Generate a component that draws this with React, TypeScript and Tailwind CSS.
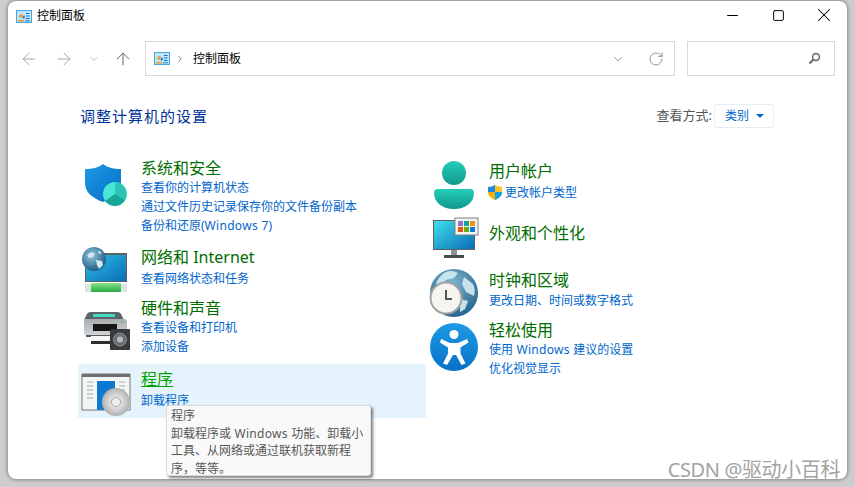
import React from "react";
import { ArrowLeft, ArrowRight, ArrowUp, ChevronDown, ChevronRight, RotateCw, Minus, Square, X } from "lucide-react";

const CpIcon = () => (
  <svg width="16" height="13" viewBox="0 0 16 13">
    <rect x="0.5" y="0.5" width="15" height="12" fill="#bfe6f8" stroke="#45a8e0" />
    <path d="M3 7.500a3.500 3.500 0 0 1 3.500-3.500v3.500z" fill="#f0962c" />
    <path d="M6.500 7.500L8 5a3 3 0 0 1 0 4z" fill="#1d6fc0" />
    <path d="M10 3.500h3.500M10 6h3.500M10 8.500h3.500" stroke="#1d6fc0" strokeWidth="1.200" />
    <rect x="2" y="10" width="6" height="1.500" fill="#f0962c" />
    <rect x="9" y="10" width="5" height="1.500" fill="#4aa3df" />
  </svg>
);

const ShieldIcon = () => (
  <svg width="48" height="48" viewBox="0 0 48 48" className="overflow-visible">
    <defs>
      <linearGradient id="sh" x1="0" y1="0" x2="1" y2="1"><stop offset="0" stopColor="#1a9be8" /><stop offset="1" stopColor="#0a6cc4" /></linearGradient>
      <linearGradient id="tc" x1="0" y1="0" x2="1" y2="1"><stop offset="0" stopColor="#45e6d4" /><stop offset="1" stopColor="#1fb5a5" /></linearGradient>
    </defs>
    <path d="M22 4c5 4 11 5 18 5v14c0 9-7 15-18 19C11 38 4 32 4 23V9c7 0 13-1 18-5z" fill="url(#sh)" />
    <circle cx="34" cy="34" r="12" fill="#49e6d5" />
    <path d="M34 34V22a12 12 0 0 1 10 18z" fill="#2cc4b2" />
    <path d="M34 34l10 6a12 12 0 0 1-20 1z" fill="#1aa598" />
  </svg>
);

const NetworkIcon = () => (
  <svg width="48" height="48" viewBox="0 0 48 48" className="overflow-visible">
    <defs>
      <linearGradient id="nm" x1="0" y1="0" x2="1" y2="1"><stop offset="0" stopColor="#2ec0e0" /><stop offset="1" stopColor="#0a6cb8" /></linearGradient>
      <linearGradient id="ng" x1="0" y1="0" x2="0" y2="1"><stop offset="0" stopColor="#8be08a" /><stop offset="1" stopColor="#24ad45" /></linearGradient>
      <radialGradient id="gl" cx="0.4" cy="0.35" r="0.7"><stop offset="0" stopColor="#8fc6de" /><stop offset="1" stopColor="#19567f" /></radialGradient>
    </defs>
    <rect x="4" y="7" width="42" height="29" fill="#5d6166" />
    <rect x="5" y="9" width="40" height="26" fill="url(#nm)" />
    <rect x="4" y="38" width="42" height="8" fill="#dfe3e3" />
    <rect x="10" y="37" width="30" height="9" rx="1" fill="url(#ng)" />
    <circle cx="13" cy="13" r="12" fill="url(#gl)" />
    <path d="M6 9c3-3 6-3 8-2l-2 4-4 1zM15 14l6 1 1 4-4 4-2-4zM17 4l4 3-3 1z" fill="#d5e8ef" />
  </svg>
);

const PrinterIcon = () => (
  <svg width="48" height="48" viewBox="0 0 48 48" className="overflow-visible">
    <defs>
      <linearGradient id="pb" x1="0" y1="0" x2="0" y2="1"><stop offset="0" stopColor="#a9adb0" /><stop offset="1" stopColor="#d4d7d9" /></linearGradient>
    </defs>
    <path d="M10 6h26c3 0 4 2 5 4l2 4H3l2-4c1-2 2-4 5-4z" fill="#5f6366" />
    <rect x="12" y="8" width="22" height="3" fill="#42d9c4" />
    <path d="M3 13h40c2 0 3 1 3 3v11c0 2-1 3-3 3H7c-2 0-4-1-4-3z" fill="url(#pb)" />
    <rect x="12" y="18" width="24" height="7" fill="#161616" />
    <rect x="5" y="29" width="38" height="2" fill="#55595c" />
    <rect x="10" y="30" width="24" height="5" fill="#f6f6f6" />
    <rect x="10" y="35" width="20" height="3" fill="#2f2f2f" />
    <circle cx="41" cy="16" r="0.9" fill="#32d05a" />
    <rect x="29" y="23" width="20" height="21" rx="1" fill="#37393b" />
    <circle cx="39" cy="33.500" r="6.500" fill="#6d7072" stroke="#8d9092" />
    <circle cx="39" cy="33.500" r="3" fill="#b9bcbe" />
  </svg>
);

const ProgramIcon = () => (
  <svg width="48" height="48" viewBox="0 0 48 48" className="overflow-visible">
    <defs>
      <radialGradient id="cd"><stop offset="0" stopColor="#f4f4f4" /><stop offset="0.6" stopColor="#d2d2d2" /><stop offset="1" stopColor="#b0b0b0" /></radialGradient>
    </defs>
    <rect x="1" y="2" width="48" height="36" fill="#f4f5f5" stroke="#777" />
    <rect x="1" y="2" width="48" height="3" fill="#6e6e6e" />
    <path d="M6 10h6M6 14h6M6 18h6M6 22h6M6 26h6M38 10h6M38 14h6M38 18h6M38 22h6" stroke="#a8a8a8" />
    <rect x="16" y="9" width="18" height="29" fill="#0f78cf" />
    <circle cx="35" cy="30" r="14" fill="url(#cd)" />
    <circle cx="35" cy="30" r="4.500" fill="#eee" stroke="#aaa" />
  </svg>
);

const UserIcon = () => (
  <svg width="48" height="48" viewBox="0 0 48 48">
    <defs>
      <linearGradient id="ut" x1="0" y1="0" x2="0" y2="1"><stop offset="0" stopColor="#25cdb8" /><stop offset="1" stopColor="#10998c" /></linearGradient>
    </defs>
    <circle cx="24" cy="12" r="12" fill="url(#ut)" />
    <path d="M8 28h32a4 4 0 0 1 4 4c0 10-9 16-20 16S4 42 4 32a4 4 0 0 1 4-4z" fill="url(#ut)" />
  </svg>
);

const AppearanceIcon = () => (
  <svg width="48" height="48" viewBox="0 0 48 48" className="overflow-visible">
    <defs>
      <linearGradient id="am" x1="0" y1="0" x2="1" y2="1"><stop offset="0" stopColor="#3fe0e8" /><stop offset="1" stopColor="#0a6cb8" /></linearGradient>
    </defs>
    <rect x="3" y="6" width="42" height="30" fill="#5d6166" />
    <rect x="4" y="7" width="40" height="28" fill="url(#am)" />
    <rect x="21" y="36" width="6" height="5" fill="#8c9499" />
    <rect x="14" y="41" width="20" height="3" fill="#4a4d50" />
    <rect x="25" y="4" width="23" height="17" fill="#f4f4f4" stroke="#808080" />
    <rect x="28" y="7" width="5" height="5" fill="#9a6fd0" /><rect x="34" y="7" width="5" height="5" fill="#12a58f" /><rect x="40" y="7" width="5" height="5" fill="#f0900f" />
    <rect x="28" y="13" width="5" height="5" fill="#e4550f" /><rect x="34" y="13" width="5" height="5" fill="#63ad14" /><rect x="40" y="13" width="5" height="5" fill="#0a78d4" />
  </svg>
);

const ClockIcon = () => (
  <svg width="48" height="48" viewBox="0 0 48 48" className="overflow-visible">
    <defs>
      <radialGradient id="cg" cx="0.45" cy="0.3" r="0.8"><stop offset="0" stopColor="#7fb6d0" /><stop offset="1" stopColor="#1a5a84" /></radialGradient>
    </defs>
    <circle cx="24" cy="24" r="24" fill="url(#cg)" />
    <path d="M14 4c6-3 10-2 14 0l-4 5-8 2-6 6-4-2c1-4 4-8 8-11zM34 8l9 7c2 4 2 8 1 12l-8-4-4-8zM30 30l8 2-3 8-5 3z" fill="#c6e2ec" />
    <circle cx="16" cy="29" r="15.500" fill="#f6f4f1" stroke="#a2a2a2" strokeWidth="2" />
    <path d="M16 21v9h6" fill="none" stroke="#555" strokeWidth="2" />
  </svg>
);

const EaseIcon = () => (
  <svg width="48" height="48" viewBox="0 0 48 48">
    <defs>
      <linearGradient id="eb" x1="0" y1="0" x2="0" y2="1"><stop offset="0" stopColor="#1f9ae6" /><stop offset="1" stopColor="#0671c7" /></linearGradient>
    </defs>
    <circle cx="24" cy="24" r="24" fill="url(#eb)" />
    <circle cx="24" cy="11.500" r="4.500" fill="#fff" />
    <path d="M11 16l9 4h8l9-4 1.500 3.500-8 5v6l5 10-4 1.500-5.500-10h-3L17 42l-4-1.500 5-10v-6l-8-5z" fill="#fff" />
  </svg>
);

const MiniShield = () => (
  <svg width="14" height="15" viewBox="0 0 14 15" className="shrink-0">
    <path d="M7 0c2 1 4 2 7 2v5c0 4-3 6-7 8V0z" fill="#f4b400" />
    <path d="M7 0C5 1 3 2 0 2v5h7z" fill="#1a8be0" />
    <path d="M7 0c2 1 4 2 7 2v5H7z" fill="#f7c325" />
    <path d="M0 7c0 4 3 6 7 8V7z" fill="#f4b400" />
    <path d="M7 7h7c0 4-3 6-7 8z" fill="#12a0e8" />
  </svg>
);

const Title = ({ children, hover }: { children: React.ReactNode; hover?: boolean }) => (
  <div className={hover ? "h-[20px] leading-[20px] text-[16px] text-[#00a300] underline" : "h-[20px] leading-[20px] text-[16px] text-[#006e00]"}>{children}</div>
);

const Lnk = ({ children }: { children: React.ReactNode }) => (
  <div className="h-[19px] leading-[19px] text-[12px] text-[#0066cc] whitespace-nowrap">{children}</div>
);

export default function App() {
  return (
    <div className="h-[487px] w-[855px] overflow-hidden bg-[#cdcdcd] px-[8px] pt-[1px] text-black" style={{ fontFamily: '"Noto Sans", "Noto Sans CJK SC", sans-serif' }}>
      <div className="relative flex h-[478px] flex-col rounded-[8px] bg-white shadow-[0_0_4px_rgba(0,0,0,0.5)]">
        {/* title bar */}
        <div className="flex h-[30px] items-center pl-[8px]">
          <CpIcon />
          <span className="ml-[5px] text-[12px]">控制面板</span>
          <div className="ml-auto flex -translate-y-[1px] items-center">
            <div className="flex w-[45px] justify-center"><Minus size={17} strokeWidth={1.4} /></div>
            <div className="flex w-[46px] justify-center"><Square size={13} strokeWidth={1.8} /></div>
            <div className="flex w-[46px] justify-center"><X size={22} strokeWidth={1.1} /></div>
          </div>
        </div>
        {/* nav bar */}
        <div className="mt-[10px] flex h-[35px] items-center">
          <ArrowLeft size={20} strokeWidth={1.2} className="ml-[11px] text-[#a8a8a8]" />
          <ArrowRight size={20} strokeWidth={1.2} className="ml-[15px] text-[#a8a8a8]" />
          <ChevronDown size={12} strokeWidth={1.500} className="ml-[14px] text-[#a8a8a8]" />
          <ArrowUp size={20} strokeWidth={1.2} className="ml-[13px] text-[#666]" />
          <div className="ml-[12px] flex h-[35px] w-[530px] items-center border border-[#d9d9d9] pl-[8px]">
            <CpIcon />
            <ChevronRight size={10} strokeWidth={2} className="ml-[5px] text-[#666]" />
            <span className="ml-[8px] text-[12px]">控制面板</span>
            <ChevronDown size={14} strokeWidth={1.2} className="ml-auto text-[#666]" />
            <RotateCw size={16} strokeWidth={1.2} className="ml-[23px] mr-[10px] text-[#777]" />
          </div>
          <div className="ml-[12px] flex h-[35px] w-[148px] items-center justify-end border border-[#d9d9d9] pr-[13px]">
            <svg width="13" height="13" viewBox="0 0 13 13">
              <circle cx="8" cy="5" r="3.400" fill="none" stroke="#666" strokeWidth="1.500" />
              <path d="M5.500 7.500L1.500 11.500" stroke="#666" strokeWidth="2" />
            </svg>
          </div>
        </div>
        {/* heading row */}
        <div className="mt-[28px] flex h-[24px] items-center pl-[72px] pr-[73px]">
          <span className="text-[15px] leading-[24px] text-[#003399] tracking-[1px]">调整计算机的设置</span>
          <span className="ml-auto text-[13px] text-[#555]">查看方式:</span>
          <div className="ml-[2px] flex h-[24px] w-[60px] items-center rounded-[3px] border border-[#e4ecf4] pl-[10px] text-[12px] text-[#0066cc]">
            类别
            <svg width="8" height="4" viewBox="0 0 8 4" className="ml-[7px]"><path d="M0 0h8L4 4z" fill="#0066cc" /></svg>
          </div>
        </div>
        {/* categories */}
        <div className="flex pl-[70px]">
          <div className="relative mt-[25px] w-[348px]">
            <div className="flex h-[89px] gap-[12px] pl-[3px] pt-[5px]">
              <div className="mt-[2px] shrink-0 w-[48px]"><ShieldIcon /></div>
              <div>
                <Title>系统和安全</Title>
                <Lnk>查看你的计算机状态</Lnk>
                <Lnk>通过文件历史记录保存你的文件备份副本</Lnk>
                <Lnk>备份和还原(<span className="tracking-[0.3px]">Windows 7)</span></Lnk>
              </div>
            </div>
            <div className="flex h-[51px] gap-[12px] pl-[3px] pt-[5px]">
              <div className="-mt-[1px] shrink-0 w-[48px]"><NetworkIcon /></div>
              <div>
                <Title>网络和 Internet</Title>
                <div className="mt-[2px]"><Lnk>查看网络状态和任务</Lnk></div>
              </div>
            </div>
            <div className="flex h-[71px] gap-[12px] pl-[3px] pt-[5px]">
              <div className="mt-[8px] shrink-0 w-[48px]"><PrinterIcon /></div>
              <div>
                <Title>硬件和声音</Title>
                <Lnk>查看设备和打印机</Lnk>
                <Lnk>添加设备</Lnk>
              </div>
            </div>
            <div className="flex h-[54px] gap-[12px] rounded-[2px] bg-[#e5f3fd] pl-[3px] pt-[5px]">
              <div className="mt-[3px] shrink-0 w-[48px]"><ProgramIcon /></div>
              <div>
                <Title hover>程序</Title>
                <div className="mt-[2px]"><Lnk>卸载程序</Lnk></div>
              </div>
            </div>
            {/* tooltip */}
            <div className="absolute left-[88px] top-[252px] h-[71px] w-[205px] rounded-[3px] border border-[#dcdcdc] bg-[#f9f9f9] px-[4px] pt-[1px] text-[12px] leading-[17.500px] text-[#575757] shadow-[2px_2px_3px_rgba(0,0,0,0.5)]">
              <div>程序</div>
              <div>卸载程序或<span className="tracking-[0.3px]"> Windows </span>功能、卸载小工具、从网络或通过联机获取新程序，等等。</div>
            </div>
          </div>
          <div className="mt-[28px] ml-[4px]">
            <div className="flex h-[62px] gap-[11px] pt-[5px]">
              <div className="shrink-0 w-[48px]"><UserIcon /></div>
              <div>
                <Title>用户帐户</Title>
                <div className="mt-[2px] -ml-[1px] flex items-center gap-[3px]"><MiniShield /><Lnk>更改帐户类型</Lnk></div>
              </div>
            </div>
            <div className="flex h-[47px] gap-[11px] pt-[5px]">
              <div className="-mt-[9px] shrink-0 w-[48px]"><AppearanceIcon /></div>
              <Title>外观和个性化</Title>
            </div>
            <div className="flex h-[50px] gap-[11px] pt-[5px]">
              <div className="-mt-[1px] shrink-0 w-[48px]"><ClockIcon /></div>
              <div>
                <Title>时钟和区域</Title>
                <div className="mt-[1px]"><Lnk>更改日期、时间或数字格式</Lnk></div>
              </div>
            </div>
            <div className="flex gap-[11px] pt-[5px]">
              <div className="mt-[3px] shrink-0 w-[48px]"><EaseIcon /></div>
              <div>
                <Title>轻松使用</Title>
                <Lnk>使用<span className="tracking-[0.3px]"> Windows </span>建议的设置</Lnk>
                <Lnk>优化视觉显示</Lnk>
              </div>
            </div>
          </div>
        </div>
        {/* watermark */}
        <div className="absolute right-[7px] bottom-[-3px] text-[20px] leading-[24px] tracking-[-0.4px] text-[#a3a3a3]">CSDN @驱动小百科</div>
      </div>
    </div>
  );
}
